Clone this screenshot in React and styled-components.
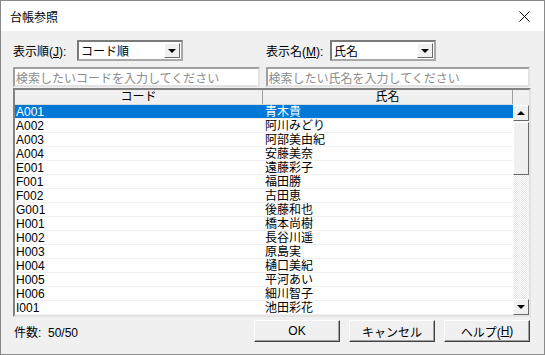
import React from "react";
import styled, { createGlobalStyle } from "styled-components";

const Global = createGlobalStyle`
html, body { margin: 0; padding: 0; background: #ffffff; }
body {
  font-family: "Liberation Sans", "Noto Sans CJK JP", sans-serif;
  font-size: 12px;
  color: #000;
}
`

const Win = styled.div`
width: 545px;
height: 355px;
box-sizing: border-box;
border: 1px solid #8a8a8a;
display: flex;
flex-direction: column;
background: #f0f0f0;
`
const TitleBar = styled.div`
height: 30px;
flex: none;
background: #ffffff;
display: flex;
align-items: center;
justify-content: space-between;
padding: 0 14px 0 9px;
font-size: 12px;
`
const Body = styled.div`
flex: 1;
display: flex;
flex-direction: column;
padding: 9px 14px 0 12px;
`
const TopRow = styled.div`
display: flex;
height: 21px;
align-items: center;
gap: 6px;
`
const Half = styled.div`
display: flex;
align-items: center;
width: ${p => p.w}px;
flex: none;
`
const Label = styled.span`
width: ${p => p.w}px;
flex: none;
white-space: nowrap;
`
const Select = styled.div`
width: ${p => p.w}px;
height: 21px;
box-sizing: border-box;
border: 2px solid #7a7a7a;
border-right-color: #a8a8a8;
border-bottom-color: #a8a8a8;
background: #fff;
display: flex;
align-items: center;
justify-content: space-between;
padding-left: 2px;
`
const DropBtn = styled.div`
width: 16px;
height: 15px;
box-sizing: border-box;
margin-right: 1px;
background: #f0f0f0;
border: 1px solid;
border-color: #ffffff #696969 #696969 #ffffff;
display: flex;
align-items: center;
justify-content: center;
`
const Tri = styled.div`
width: 0;
height: 0;
border-left: 4px solid transparent;
border-right: 4px solid transparent;
${p => p.up ? "border-bottom: 4px solid #000;" : "border-top: 4px solid #000;"}
`
const SearchRow = styled.div`
display: flex;
margin-top: 6px;
gap: 6px;
`
const Search = styled.div`
width: ${p => p.w}px;
height: 20px;
box-sizing: border-box;
border: 2px solid #a0a0a0;
border-right-color: #e3e3e3;
border-bottom-color: #e3e3e3;
background: #fff;
color: #8c8c8c;
display: flex;
align-items: center;
padding-left: 1px;
white-space: nowrap;
overflow: hidden;
`
const Table = styled.div`
margin-top: 1px;
width: 518px;
box-sizing: border-box;
border: 2px solid #828282;
border-right-color: #e3e3e3;
border-bottom-color: #e3e3e3;
background: #fff;
display: flex;
`
const Main = styled.div`
flex: 1;
display: flex;
flex-direction: column;
`
const Head = styled.div`
display: flex;
height: 14px;
background: #f0f0f0;
border-bottom: 1px solid #d8d8d8;
`
const HeadCell = styled.div`
width: ${p => p.w}px;
flex: none;
box-sizing: border-box;
border-right: 1px solid #a0a0a0;
text-align: center;
line-height: 14px;
`
const Row = styled.div`
display: flex;
height: 14px;
box-sizing: border-box;
border-bottom: 1px solid #f0f0f0;
background: ${p => p.sel ? "#0078d7" : "#ffffff"};
color: ${p => p.sel ? "#ffffff" : "#000000"};
`
const Cell = styled.div`
width: ${p => p.w}px;
flex: none;
padding-left: ${p => p.pl}px;
box-sizing: border-box;
line-height: 14px;
white-space: nowrap;
`
const Scroll = styled.div`
width: 16px;
flex: none;
display: flex;
flex-direction: column;
background: #f0f0f0;
`
const ScrollHead = styled.div`
height: 15px;
flex: none;
background: #f0f0f0;
`
const ScrollBtn = styled.div`
height: 16px;
flex: none;
box-sizing: border-box;
background: #f0f0f0;
border: 1px solid;
border-color: #ffffff #696969 #696969 #ffffff;
display: flex;
align-items: center;
justify-content: center;
`
const Thumb = styled.div`
height: 53px;
flex: none;
box-sizing: border-box;
margin-top: 1px;
background: #f0f0f0;
border: 1px solid;
border-color: #ffffff #696969 #696969 #ffffff;
`
const Track = styled.div`
flex: 1;
background-color: #ffffff;
background-image: repeating-conic-gradient(#e6e6e6 0 25%, #ffffff 0 50%);
background-size: 2px 2px;
`
const Footer = styled.div`
display: flex;
align-items: center;
margin-top: 3px;
height: 22px;
`
const Count = styled.span`
flex: 1;
padding-left: 1px;
white-space: pre;
`
const Btn = styled.div`
width: 86px;
height: 22px;
box-sizing: border-box;
margin-left: ${p => p.ml}px;
background: #f0f0f0;
border: 1px solid;
border-color: #ffffff #404040 #404040 #ffffff;
box-shadow: inset -1px -1px 0 #a0a0a0;
display: flex;
align-items: center;
justify-content: center;
`

const rows = [
  ["A001", "青木貴"], ["A002", "阿川みどり"], ["A003", "阿部美由紀"],
  ["A004", "安藤美奈"], ["E001", "遠藤彩子"], ["F001", "福田勝"],
  ["F002", "古田恵"], ["G001", "後藤和也"], ["H001", "橋本尚樹"],
  ["H002", "長谷川遥"], ["H003", "原島実"], ["H004", "樋口美紀"],
  ["H005", "平河あい"], ["H006", "細川智子"], ["I001", "池田彩花"],
];

function CloseIcon() {
  return (
    <svg width="11" height="11" viewBox="0 0 11 11">
      <path d="M0.5 0.5 L10.5 10.5 M10.5 0.5 L0.5 10.5" stroke="#000" strokeWidth="1" fill="none" />
    </svg>
  )
}

export default function App() {
  return (
    <Win>
      <Global />
      <TitleBar>
        <span>台帳参照</span>
        <CloseIcon />
      </TitleBar>
      <Body>
        <TopRow>
          <Half w={247}>
            <Label w={64}>表示順(<u>J</u>):</Label>
            <Select w={106}>
              <span>コード順</span>
              <DropBtn><Tri /></DropBtn>
            </Select>
          </Half>
          <Half w={264}>
            <Label w={64}>表示名(<u>M</u>):</Label>
            <Select w={106}>
              <span>氏名</span>
              <DropBtn><Tri /></DropBtn>
            </Select>
          </Half>
        </TopRow>
        <SearchRow>
          <Search w={247}>検索したいコードを入力してください</Search>
          <Search w={265}>検索したい氏名を入力してください</Search>
        </SearchRow>
        <Table>
          <Main>
            <Head>
              <HeadCell w={248}>コード</HeadCell>
              <HeadCell w={250}>氏名</HeadCell>
            </Head>
            {rows.map(([code, name], i) => (
              <Row key={code} sel={i === 0}>
                <Cell w={248} pl={1}>{code}</Cell>
                <Cell w={250} pl={2}>{name}</Cell>
              </Row>
            ))}
          </Main>
          <Scroll>
            <ScrollHead />
            <ScrollBtn><Tri up /></ScrollBtn>
            <Thumb />
            <Track />
            <ScrollBtn><Tri /></ScrollBtn>
          </Scroll>
        </Table>
        <Footer>
          <Count>件数:  50/50</Count>
          <Btn ml={0}>OK</Btn>
          <Btn ml={9}>キャンセル</Btn>
          <Btn ml={9}>ヘルプ(<u>H</u>)</Btn>
        </Footer>
      </Body>
    </Win>
  )
}
